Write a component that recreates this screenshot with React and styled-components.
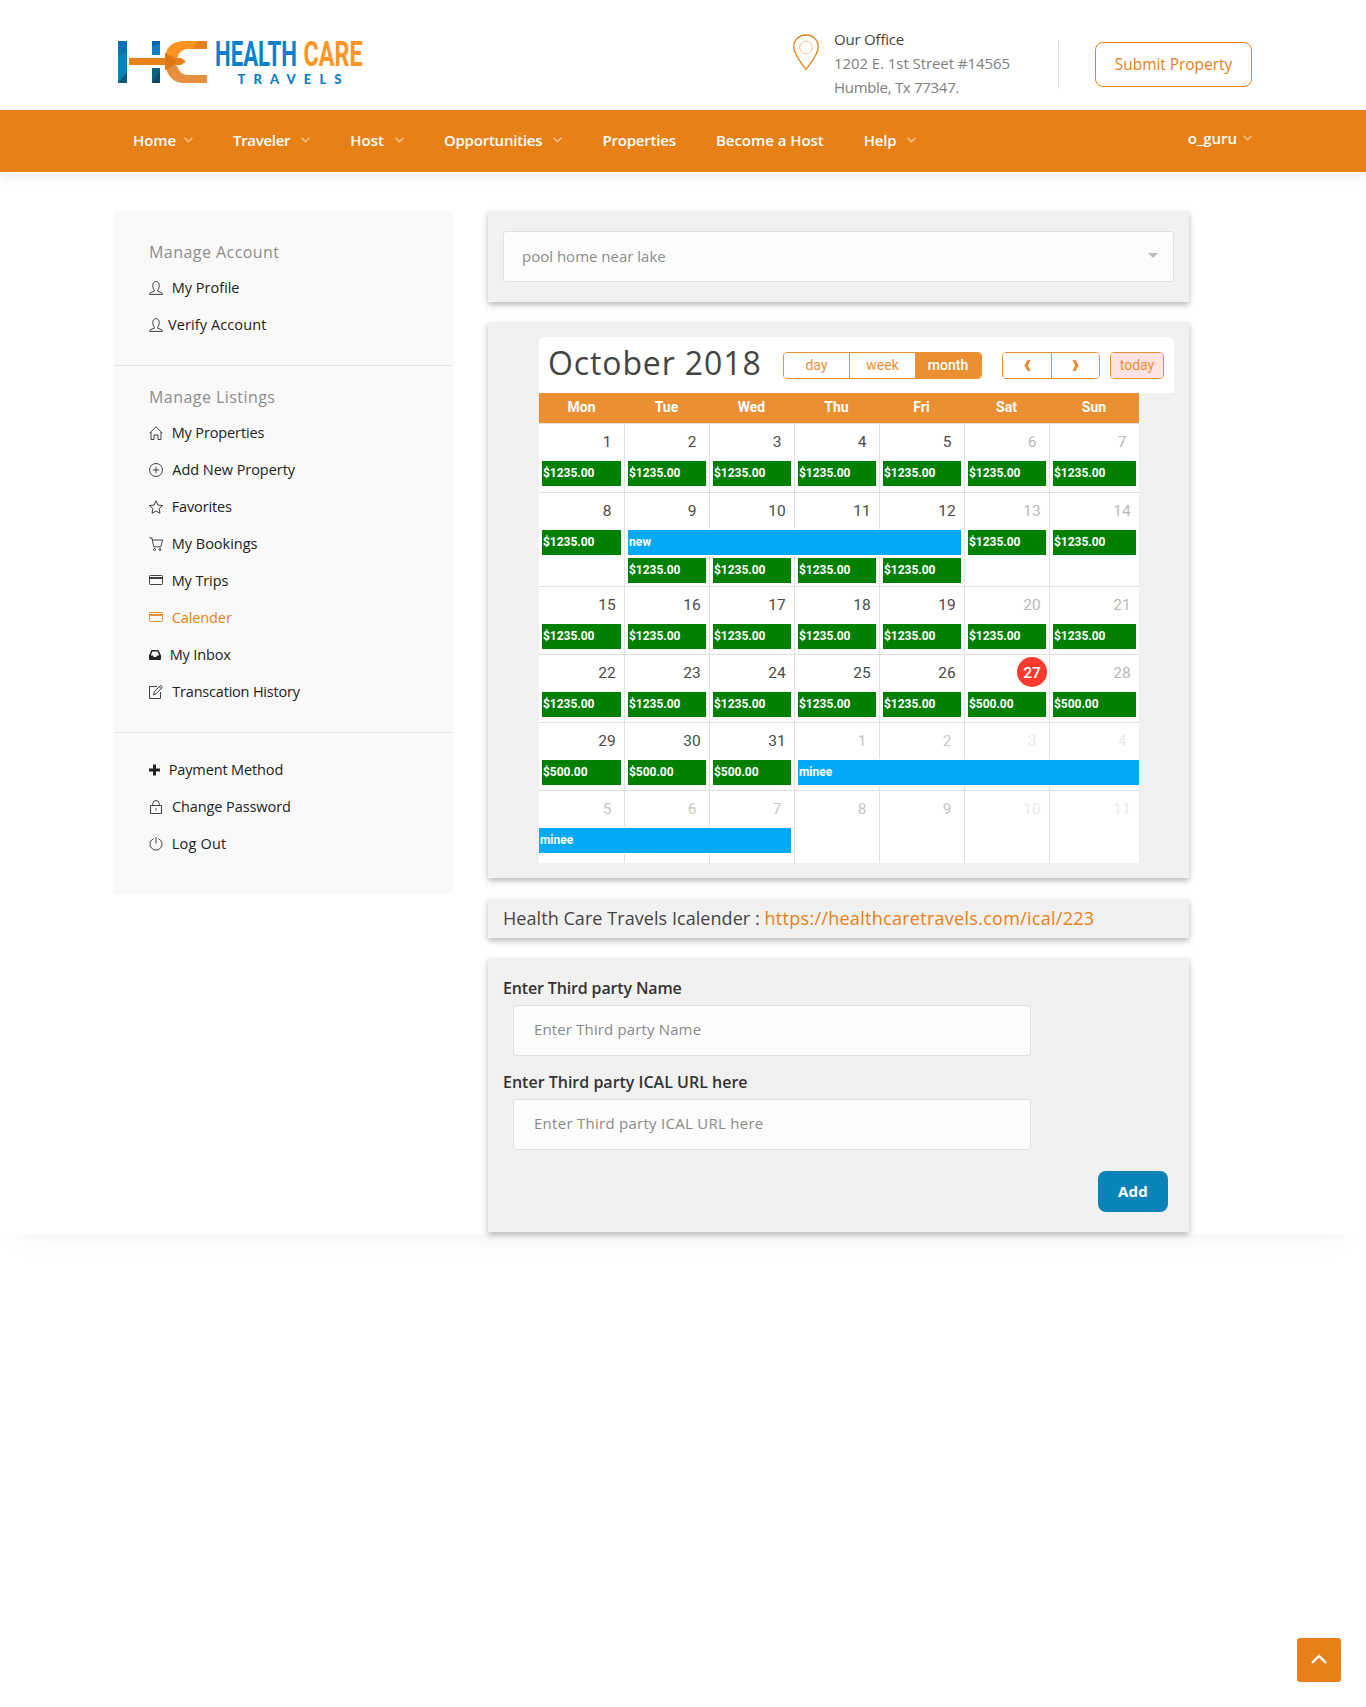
import React from "react";
import styled, { createGlobalStyle, css } from "styled-components";

const ORANGE = "#e78016";
const CAL_ORANGE = "#ea9033";

const GlobalStyle = createGlobalStyle`
  * { box-sizing: border-box; }
  body {
    margin: 0;
    background: #fff;
    color: #444;
    font-family: "Open Sans", "Noto Sans", sans-serif;
    font-size: 15px;
  }
  a { text-decoration: none; color: inherit; }
`;

const Page = styled.div`
  min-height: 1707px;
  background: #fff;
`;

/* ---------- header ---------- */

const Header = styled.header`
  position: relative;
  z-index: 2;
  height: 174px;
  background: #fff;
  box-shadow: 0 0 12px rgba(0, 0, 0, 0.13);
`;

const TopBar = styled.div`
  display: flex;
  align-items: flex-start;
  width: 1138px;
  height: 110px;
  margin: 0 auto;
`;

const LogoLink = styled.a`
  display: block;
  margin: 36px auto 0 0;
  svg { display: block; overflow: visible; }
`;

const PinIcon = styled.svg`
  margin: 34px 15px 0 0;
  width: 26px;
  height: 37px;
`;

const Office = styled.div`
  width: 224px;
  padding-top: 27px;
  line-height: 24px;
  color: #808080;
`;

const OfficeLine = styled.div`
  color: ${(p) => (p.$dark ? "#444" : "inherit")};
  letter-spacing: ${(p) => p.$ls}px;
`;

const Divider = styled.div`
  width: 1px;
  height: 48px;
  margin: 41px 36px 0 0;
  background: #ddd;
`;

const SubmitButton = styled.a`
  width: 157px;
  height: 45px;
  margin-top: 42px;
  border: 1px solid ${ORANGE};
  border-radius: 8px;
  color: ${ORANGE};
  font-size: 15.5px;
  line-height: 42px;
  letter-spacing: -0.05px;
  text-align: center;
`;

const Nav = styled.nav`
  height: 62px;
  background: ${ORANGE};
`;

const NavInner = styled.div`
  display: flex;
  width: 1138px;
  margin: 0 auto;
  padding-left: 19px;
  color: #fff;
  font-weight: 600;
`;

const NavItem = styled.a`
  display: flex;
  align-items: center;
  height: 60px;
  margin-right: 40px;
  letter-spacing: ${(p) => p.$ls || 0}px;
  svg { margin-left: ${(p) => p.$gap || 11}px; }
`;

const UserMenu = styled(NavItem)`
  height: 55px;
  margin: 0 0 0 auto;
`;

/* ---------- layout ---------- */

const Main = styled.main`
  height: 1060px;
  padding-top: 37px;
  background: #fff;
  box-shadow: 0 24px 28px -21px rgba(0, 0, 0, 0.055);
`;

const Columns = styled.div`
  display: flex;
  align-items: flex-start;
  gap: 35px;
  width: 1138px;
  margin: 0 auto;
`;

const Content = styled.div`
  display: flex;
  flex-direction: column;
  width: 701px;
`;

/* ---------- sidebar ---------- */

const Sidebar = styled.aside`
  width: 339px;
  border-radius: 3px;
  background: #f9f9f9;
`;

const SideSection = styled.section`
  padding: ${(p) => p.$top}px 34px ${(p) => p.$bottom}px 35px;
  & + & { border-top: 1px solid #e4e4e4; }
`;

const SideTitle = styled.h3`
  height: 34px;
  margin: 0;
  color: #8d8d8d;
  font-size: 16px;
  font-weight: 400;
  line-height: 35px;
  letter-spacing: 0.45px;
`;

const SideLink = styled.a`
  display: flex;
  align-items: center;
  gap: ${(p) => p.$gap}px;
  height: 37px;
  color: ${(p) => (p.$active ? ORANGE : "#222")};
  font-size: 14.5px;
  letter-spacing: ${(p) => p.$ls}px;
  svg { display: block; flex: none; }
`;

/* ---------- cards ---------- */

const Card = styled.section`
  margin-bottom: ${(p) => p.$after}px;
  padding: ${(p) => p.$pad};
  background: #f1f1f1;
  box-shadow: 0 3px 6px rgba(0, 0, 0, 0.27);
`;

const Select = styled.div`
  display: flex;
  align-items: center;
  justify-content: space-between;
  height: 51px;
  padding: 0 15px 2px 18px;
  border: 1px solid #e0e0e0;
  border-radius: 3px;
  background: #fcfcfc;
  color: #8d8d8d;
`;

const Caret = styled.span`
  border: 5px solid transparent;
  border-top-color: #bbb;
  border-bottom: 0;
`;

const CalToolbar = styled.div`
  display: flex;
  align-items: flex-start;
  width: 635px;
  height: 56px;
  margin-left: 36px;
  padding: 0 10px 0 9px;
  border-radius: 5px 5px 0 0;
  background: #fff;
  font-family: Roboto, sans-serif;
  font-size: 14px;
`;

const CalTitle = styled.h2`
  margin: 0 auto 0 0;
  color: #444;
  font: 400 32px/51px "Open Sans", sans-serif;
  letter-spacing: 0.88px;
`;

const ButtonGroup = styled.div`
  display: flex;
  height: 27px;
  margin: 15px 0 0 ${(p) => p.$before}px;
  border: 1px solid ${CAL_ORANGE};
  border-radius: 4px;
  overflow: hidden;
`;

const CalButton = styled.button`
  display: flex;
  align-items: center;
  justify-content: center;
  width: ${(p) => p.$w}px;
  height: 25px;
  margin: 0;
  padding: 0 0 ${(p) => (p.$icon ? 0 : 2)}px;
  border: 0;
  border-right: ${(p) => (p.$divide ? `1px solid ${CAL_ORANGE}` : "0")};
  background: ${(p) => (p.$active ? CAL_ORANGE : p.$muted ? "#ffe2e2" : "#fff")};
  color: ${(p) => (p.$active ? "#fff" : CAL_ORANGE)};
  font: ${(p) => (p.$active ? 500 : 400)} 14px/20px Roboto, sans-serif;
`;

const COLS = "repeat(6, 85px) 90px";

const Calendar = styled.div`
  width: 600px;
  margin-left: 36px;
  background: #fff;
  font-family: Roboto, sans-serif;
  overflow: hidden;
`;

const WeekHead = styled.div`
  display: grid;
  grid-template-columns: ${COLS};
  height: 30px;
  background: ${CAL_ORANGE};
  color: #fff;
  font-size: 14px;
  font-weight: 700;
  line-height: 29px;
  text-align: center;
`;

const Week = styled.div`
  display: grid;
  grid-template-columns: ${COLS};
  grid-template-rows: 37px 28px 28px;
  height: ${(p) => p.$h}px;
  border-top: 1px solid #e0e0e0;
  overflow: hidden;
`;

const DayCell = styled.div`
  grid-column: ${(p) => p.$col};
  grid-row: 1 / -1;
  border-left: ${(p) => (p.$col > 1 ? "1px solid #e0e0e0" : "0")};
`;

const dayColor = (p) => {
  if (p.$today) return "#fff";
  if (p.$other) return p.$weekend ? "#ebebeb" : "#c6c6c6";
  return p.$weekend ? "#b9b9b9" : "#4a4a4a";
};

const DayNumber = styled.div`
  grid-column: ${(p) => p.$col};
  grid-row: 1;
  justify-self: end;
  width: 30px;
  height: 30px;
  margin: 2px 2px 0 0;
  border-radius: 50%;
  background: ${(p) => (p.$today ? "#ff3b30" : "transparent")};
  color: ${dayColor};
  font-size: 15.5px;
  font-weight: ${(p) => (p.$today ? 500 : 400)};
  line-height: 32px;
  text-align: center;
`;

const Event = styled.div`
  grid-column: ${(p) => p.$col} / span ${(p) => p.$span || 1};
  grid-row: ${(p) => p.$row || 2};
  height: 25px;
  margin-left: ${(p) => (p.$openLeft ? 0 : p.$col === 1 ? 3 : 4)}px;
  margin-right: ${(p) => (p.$openRight ? 0 : 3)}px;
  padding-left: 1px;
  background: #008000;
  color: #fff;
  font-size: 12px;
  font-weight: 700;
  line-height: 24px;
  letter-spacing: -0.03px;
  ${(p) =>
    p.$booking &&
    css`
      background: #03a9f4;
      box-shadow: 0 0 0 1px #fff;
    `}
`;

const Ical = styled.div`
  color: #444;
  font-size: 18px;
  line-height: 38px;
  white-space: nowrap;
  letter-spacing: 0.06px;
  a { color: ${ORANGE}; letter-spacing: 0.28px; }
`;

const Label = styled.label`
  display: block;
  height: 30px;
  margin-bottom: 2px;
  color: #333;
  font-size: 16px;
  font-weight: 600;
  line-height: 31px;
  letter-spacing: ${(p) => p.$ls}px;
`;

const Input = styled.input`
  display: block;
  width: 518px;
  height: 51px;
  margin: 0 0 ${(p) => p.$after}px 10px;
  padding: 0 20px 3px;
  border: 1px solid #e0e0e0;
  border-radius: 3px;
  background: #fcfcfc;
  font: 400 15px "Open Sans", sans-serif;
  letter-spacing: ${(p) => p.$ls}px;
  &::placeholder { color: #8a8a8a; opacity: 1; }
`;

const AddButton = styled.button`
  display: block;
  width: 70px;
  height: 41px;
  margin: 0 6px 0 auto;
  padding: 0 0 2px;
  border: 0;
  border-radius: 8px;
  background: #0983b8;
  color: #fff;
  font: 700 15px/38px "Open Sans", sans-serif;
  letter-spacing: 0.3px;
`;

const ScrollTop = styled.a`
  position: fixed;
  right: 25px;
  bottom: 25px;
  display: flex;
  align-items: center;
  justify-content: center;
  width: 44px;
  height: 44px;
  padding-bottom: 2px;
  border-radius: 3px;
  background: ${ORANGE};
`;

/* ---------- drawings ---------- */

const Chevron = () => (
  <svg width="9" height="6" viewBox="0 0 9 6" fill="none" stroke="#fff" strokeOpacity=".55" strokeWidth="1.4">
    <path d="M.6.8 4.5 4.8 8.4.8" />
  </svg>
);

const Logo = () => (
  <svg width="252" height="52" viewBox="0 0 252 52">
    <path fill="#0a83bd" d="M4 5h9v42H4z" />
    <path fill="#0072b5" d="M4 5h9v12l-9 2z" />
    <path fill="#0a5878" d="M13 36v11H4z" />
    <path fill="#0b7fc9" d="M38 5h8v14h-8z" />
    <path fill="#0069ae" d="M38 5h8v3l-8 3z" />
    <path fill="#07617f" d="M38 32h8v15h-8z" />
    <path fill="#0a4a66" d="M46 35v12h-8z" />
    <path fill="#ff9420" d="M93 5v8H74q-8 0-11 9l-12-3Q55 5 70 5z" />
    <path fill="#e78016" d="M83 5h10v8H79z" />
    <path fill="#e8903f" d="M93 47v-8H74q-8 0-11-9l-12-1q4 18 19 18z" />
    <path fill="#e78016" d="M15 22h36v-5l12 5h4l5 3.500-5 3.500h-4L51 34v-5H15z" />
    <path fill="#d06f10" d="M51 17l12 8.500L51 34z" opacity=".5" />
    <g fontFamily="Roboto, sans-serif" fontWeight="700" fontSize="35">
      <text x="101" y="30" fill="#0a7fcb" textLength="82" lengthAdjust="spacingAndGlyphs">HEALTH</text>
      <text x="189.500" y="30" fill="#ff9420" textLength="59" lengthAdjust="spacingAndGlyphs">CARE</text>
    </g>
    <text x="123.500" y="48.300" fill="#0a7fc2" fontFamily="Lato, sans-serif" fontWeight="900" fontSize="13" textLength="104" lengthAdjust="spacing">TRAVELS</text>
  </svg>
);

const Icon = ({ children, w = 14, solid }) => (
  <svg width={w} height="14" viewBox={`0 0 ${w} 14`} fill={solid ? "currentColor" : "none"} stroke={solid ? "none" : "currentColor"} strokeWidth=".85">
    {children}
  </svg>
);

const icons = {
  user: (
    <Icon>
      <path d="M5.300 9.200C4.300 8 3.800 6.500 3.800 4.500 3.800 2 5 .6 7 .6s3.200 1.400 3.200 3.900c0 2-.5 3.500-1.500 4.700v1l3.300 1.300q1.500.6 1.500 1.900H.5q0-1.300 1.500-1.900l3.300-1.300z" />
    </Icon>
  ),
  home: (
    <Icon>
      <path d="M.5 7.300 7 .8l6.500 6.500M2 6v7.500h3V9h4v4.500h3V6" />
    </Icon>
  ),
  add: (
    <Icon>
      <circle cx="7" cy="7" r="6.500" />
      <path d="M7 3.800v6.400M3.800 7h6.400" />
    </Icon>
  ),
  star: (
    <Icon>
      <path d="m7 .8 1.900 4.300 4.600.5-3.400 3.100.9 4.600L7 11l-4 2.300.9-4.600L.5 5.600l4.600-.5z" />
    </Icon>
  ),
  cart: (
    <Icon>
      <path d="M.3.800h2.500l2 9h7L13.500 3H3.400" />
      <circle cx="5.500" cy="12.500" r="1" />
      <circle cx="11" cy="12.500" r="1" />
    </Icon>
  ),
  card: (
    <Icon>
      <rect x=".5" y="1.500" width="13" height="9" rx=".8" />
      <path d="M.5 4h13" strokeWidth="1.700" />
    </Icon>
  ),
  inbox: (
    <Icon w={12} solid>
      <path fillRule="evenodd" d="M2.500 2h7l2.500 5.500V11q0 1-1 1H1q-1 0-1-1V7.500zM3.400 3.500 1.800 7.500h2.200l.8 1.600h2.400L8 7.500h2.200L8.600 3.500z" />
    </Icon>
  ),
  edit: (
    <Icon>
      <path d="M8 1.500H.5v12h11V7M4.500 9.800l.8-3L11.200.7q.6-.5 1.200.1l.6.6q.5.6 0 1.200L7.200 8.800zM10.300 1.700l1.900 1.900" />
    </Icon>
  ),
  plus: (
    <Icon w={11} solid>
      <path d="M4 1.500h3v4h4v3H7v4H4v-4H0v-3h4z" />
    </Icon>
  ),
  lock: (
    <Icon>
      <path d="M1.500 5.500h11v8h-11zM3.800 5.500V3.600Q3.800.5 7 .5t3.200 3.100v1.900M7 8.200v2.400" />
    </Icon>
  ),
  power: (
    <Icon>
      <path d="M7 0v6.500M4.700 1.600a6 6 0 1 0 4.600 0" />
    </Icon>
  ),
};

/* ---------- data ---------- */

const navItems = [
  { label: "Home", ls: -0.1, gap: 8, menu: true },
  { label: "Traveler", ls: -0.3, menu: true },
  { label: "Host", ls: 0, menu: true },
  { label: "Opportunities", ls: -0.22, menu: true },
  { label: "Properties", ls: -0.18 },
  { label: "Become a Host", ls: -0.04 },
  { label: "Help", ls: -0.2, menu: true },
];

const sections = [
  {
    title: "Manage Account", top: 24, bottom: 22,
    links: [["user", "My Profile", 0, 8.7], ["user", "Verify Account", 0.1, 5]],
  },
  {
    title: "Manage Listings", top: 14, bottom: 22,
    links: [
      ["home", "My Properties", -0.13, 8.7], ["add", "Add New Property", -0.05, 9.3], ["star", "Favorites", -0.14, 8.7],
      ["cart", "My Bookings", 0, 8.7], ["card", "My Trips", -0.11, 8.7], ["card", "Calender", -0.1, 8.7, true],
      ["inbox", "My Inbox", -0.14, 8.7], ["edit", "Transcation History", -0.2, 9.3],
    ],
  },
  {
    top: 18, bottom: 32,
    links: [["plus", "Payment Method", -0.13, 8.7], ["lock", "Change Password", -0.08, 8.9], ["power", "Log Out", 0.2, 8.7]],
  },
];

const price = (amount, cols, row) => cols.map((col) => ({ text: amount, col, row }));
const ALL = [1, 2, 3, 4, 5, 6, 7];

const weeks = [
  { h: 69, days: [1, 2, 3, 4, 5, 6, 7], events: price("$1235.00", ALL) },
  {
    h: 94, days: [8, 9, 10, 11, 12, 13, 14],
    events: [
      ...price("$1235.00", [1, 6, 7]),
      { text: "new", col: 2, span: 4, booking: true },
      ...price("$1235.00", [2, 3, 4, 5], 3),
    ],
  },
  { h: 68, days: [15, 16, 17, 18, 19, 20, 21], events: price("$1235.00", ALL) },
  {
    h: 68, days: [22, 23, 24, 25, 26, 27, 28], today: 27,
    events: [...price("$1235.00", [1, 2, 3, 4, 5]), ...price("$500.00", [6, 7])],
  },
  {
    h: 68, days: [29, 30, 31, 1, 2, 3, 4], otherFrom: 3,
    events: [...price("$500.00", [1, 2, 3]), { text: "minee", col: 4, span: 4, booking: true, openRight: true }],
  },
  {
    h: 73, days: [5, 6, 7, 8, 9, 10, 11], otherFrom: 0,
    events: [{ text: "minee", col: 1, span: 3, booking: true, openLeft: true }],
  },
];

const WeekRow = ({ week }) => (
  <Week $h={week.h}>
    {ALL.map((col) => (
      <DayCell key={col} $col={col} />
    ))}
    {week.days.map((day, i) => (
      <DayNumber key={day} $col={i + 1} $weekend={i > 4} $other={i >= (week.otherFrom ?? 7)} $today={day === week.today}>
        {day}
      </DayNumber>
    ))}
    {week.events.map((e) => (
      <Event key={`${e.col}-${e.row || 2}`} $col={e.col} $row={e.row} $span={e.span} $booking={e.booking} $openLeft={e.openLeft} $openRight={e.openRight}>
        {e.text}
      </Event>
    ))}
  </Week>
);

export default function App() {
  return (
    <Page>
      <GlobalStyle />
      <Header>
        <TopBar>
          <LogoLink href="#"><Logo /></LogoLink>
          <PinIcon viewBox="0 0 26 37" fill="none" stroke={ORANGE}>
            <path strokeWidth="1.300" d="M13 35.500C8.500 29 .8 20.500.8 13.200.8 5.800 6 1 13 1s12.200 4.800 12.200 12.200C25.200 20.500 17.500 29 13 35.500z" />
            <circle cx="13" cy="13.500" r="6.300" strokeWidth=".8" strokeOpacity=".6" />
          </PinIcon>
          <Office>
            <OfficeLine $dark $ls={-0.2}>Our Office</OfficeLine>
            <OfficeLine $ls={-0.07}>1202 E. 1st Street #14565</OfficeLine>
            <OfficeLine $ls={-0.3}>Humble, Tx 77347.</OfficeLine>
          </Office>
          <Divider />
          <SubmitButton href="#">Submit Property</SubmitButton>
        </TopBar>
        <Nav>
          <NavInner>
            {navItems.map((n) => (
              <NavItem key={n.label} href="#" $ls={n.ls} $gap={n.gap}>
                {n.label}
                {n.menu && <Chevron />}
              </NavItem>
            ))}
            <UserMenu href="#" $gap={6}>o_guru<Chevron /></UserMenu>
          </NavInner>
        </Nav>
      </Header>

      <Main>
        <Columns>
          <Sidebar>
            {sections.map((s) => (
              <SideSection key={s.top} $top={s.top} $bottom={s.bottom}>
                {s.title && <SideTitle>{s.title}</SideTitle>}
                {s.links.map(([icon, label, ls, gap, active]) => (
                  <SideLink key={label} href="#" $ls={ls} $gap={gap} $active={active}>
                    {icons[icon]}
                    {label}
                  </SideLink>
                ))}
              </SideSection>
            ))}
          </Sidebar>

          <Content>
            <Card $pad="20px 15px" $after={20}>
              <Select>pool home near lake<Caret /></Select>
            </Card>

            <Card $pad="15px" $after={21}>
              <CalToolbar>
                <CalTitle>October 2018</CalTitle>
                <ButtonGroup $before={0}>
                  <CalButton $w={66} $divide>day</CalButton>
                  <CalButton $w={65}>week</CalButton>
                  <CalButton $w={66} $active>month</CalButton>
                </ButtonGroup>
                <ButtonGroup $before={20}>
                  <CalButton $w={49} $divide $icon aria-label="Previous">
                    <svg width="7" height="11" viewBox="0 0 7 11" fill={CAL_ORANGE}><path d="M3.500 0h3L4 5.500 6.500 11h-3L.300 5.500z" /></svg>
                  </CalButton>
                  <CalButton $w={47} $icon aria-label="Next">
                    <svg width="7" height="11" viewBox="0 0 7 11" fill={CAL_ORANGE}><path d="M3.500 0h-3L3 5.500.5 11h3l3.200-5.500z" /></svg>
                  </CalButton>
                </ButtonGroup>
                <ButtonGroup $before={10}>
                  <CalButton $w={52} $muted>today</CalButton>
                </ButtonGroup>
              </CalToolbar>
              <Calendar>
                <WeekHead>
                  {["Mon", "Tue", "Wed", "Thu", "Fri", "Sat", "Sun"].map((d) => (
                    <span key={d}>{d}</span>
                  ))}
                </WeekHead>
                {weeks.map((w) => (
                  <WeekRow key={w.days[0]} week={w} />
                ))}
              </Calendar>
            </Card>

            <Card $pad="0 15px 1px" $after={20}>
              <Ical>
                Health Care Travels Icalender : <a href="#">https://healthcaretravels.com/ical/223</a>
              </Ical>
            </Card>

            <Card $pad="15px 15px 20px" $after={0}>
              <Label $ls={-0.15}>Enter Third party Name</Label>
              <Input $ls={0.14} $after={11} placeholder="Enter Third party Name" />
              <Label $ls={0}>Enter Third party ICAL URL here</Label>
              <Input $ls={0.27} $after={21} placeholder="Enter Third party ICAL URL here" />
              <AddButton>Add</AddButton>
            </Card>
          </Content>
        </Columns>
      </Main>

      <ScrollTop href="#" aria-label="Back to top">
        <svg width="16" height="10" viewBox="0 0 16 10" fill="none" stroke="#fff" strokeWidth="2.300">
          <path d="M1 9 8 2l7 7" />
        </svg>
      </ScrollTop>
    </Page>
  );
}
